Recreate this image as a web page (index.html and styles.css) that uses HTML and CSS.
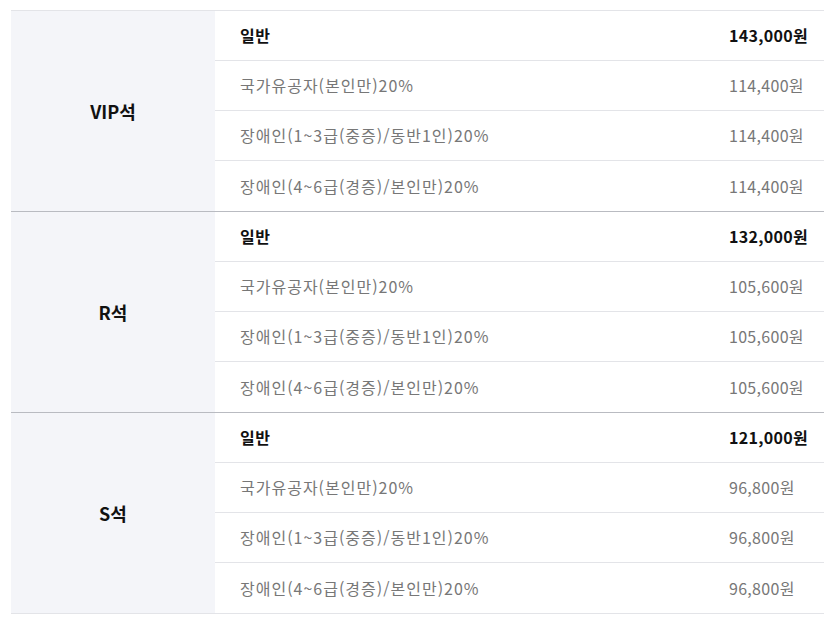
FILE: index.html
```html
<!DOCTYPE html>
<html lang="ko">
<head>
<meta charset="utf-8">
<title>좌석 가격</title>
<link rel="stylesheet" href="styles.css">
</head>
<body>
<div class="price-table">
  <div class="group">
    <div class="seat">VIP석</div>
    <div class="rows">
      <div class="row main"><span class="name">일반</span><span class="price">143,000원</span></div>
      <div class="row"><span class="name">국가유공자(본인만)20%</span><span class="price">114,400원</span></div>
      <div class="row"><span class="name">장애인(1~3급(중증)/동반1인)20%</span><span class="price">114,400원</span></div>
      <div class="row"><span class="name">장애인(4~6급(경증)/본인만)20%</span><span class="price">114,400원</span></div>
    </div>
  </div>
  <div class="group">
    <div class="seat">R석</div>
    <div class="rows">
      <div class="row main"><span class="name">일반</span><span class="price">132,000원</span></div>
      <div class="row"><span class="name">국가유공자(본인만)20%</span><span class="price">105,600원</span></div>
      <div class="row"><span class="name">장애인(1~3급(중증)/동반1인)20%</span><span class="price">105,600원</span></div>
      <div class="row"><span class="name">장애인(4~6급(경증)/본인만)20%</span><span class="price">105,600원</span></div>
    </div>
  </div>
  <div class="group last">
    <div class="seat">S석</div>
    <div class="rows">
      <div class="row main"><span class="name">일반</span><span class="price">121,000원</span></div>
      <div class="row"><span class="name">국가유공자(본인만)20%</span><span class="price">96,800원</span></div>
      <div class="row"><span class="name">장애인(1~3급(중증)/동반1인)20%</span><span class="price">96,800원</span></div>
      <div class="row"><span class="name">장애인(4~6급(경증)/본인만)20%</span><span class="price">96,800원</span></div>
    </div>
  </div>
</div>
</body>
</html>
```

FILE: styles.css
```css
html, body {
  margin: 0;
  padding: 0;
  background: #ffffff;
}

body {
  padding: 10px 8px 0 11px;
  font-family: "Noto Sans CJK KR", "Noto Sans", sans-serif;
  font-size: 16px;
  color: #777777;
}

.price-table {
  border-top: 1px solid #e3e4e8;
}

.group {
  display: flex;
  border-bottom: 1px solid #b9bbc1;
}

.group.last {
  border-bottom: 1px solid #e3e4e8;
}

.seat {
  width: 204px;
  flex: none;
  background: #f4f5f9;
  display: flex;
  align-items: center;
  justify-content: center;
  font-weight: 700;
  font-size: 18px;
  color: #111111;
}

.rows {
  flex: 1;
  display: flex;
  flex-direction: column;
}

.row {
  height: 50px;
  box-sizing: border-box;
  display: flex;
  align-items: center;
  padding-left: 25px;
  padding-bottom: 1px;
  border-bottom: 1px solid #e3e4e8;
}

.row:last-child {
  border-bottom: none;
}

.name {
  flex: 1;
  letter-spacing: 1px;
}

.price {
  width: 95px;
  flex: none;
  letter-spacing: 0.3px;
}

.row.main {
  color: #111111;
  font-weight: 700;
}

.row.main .name {
  letter-spacing: 0.5px;
}
```
